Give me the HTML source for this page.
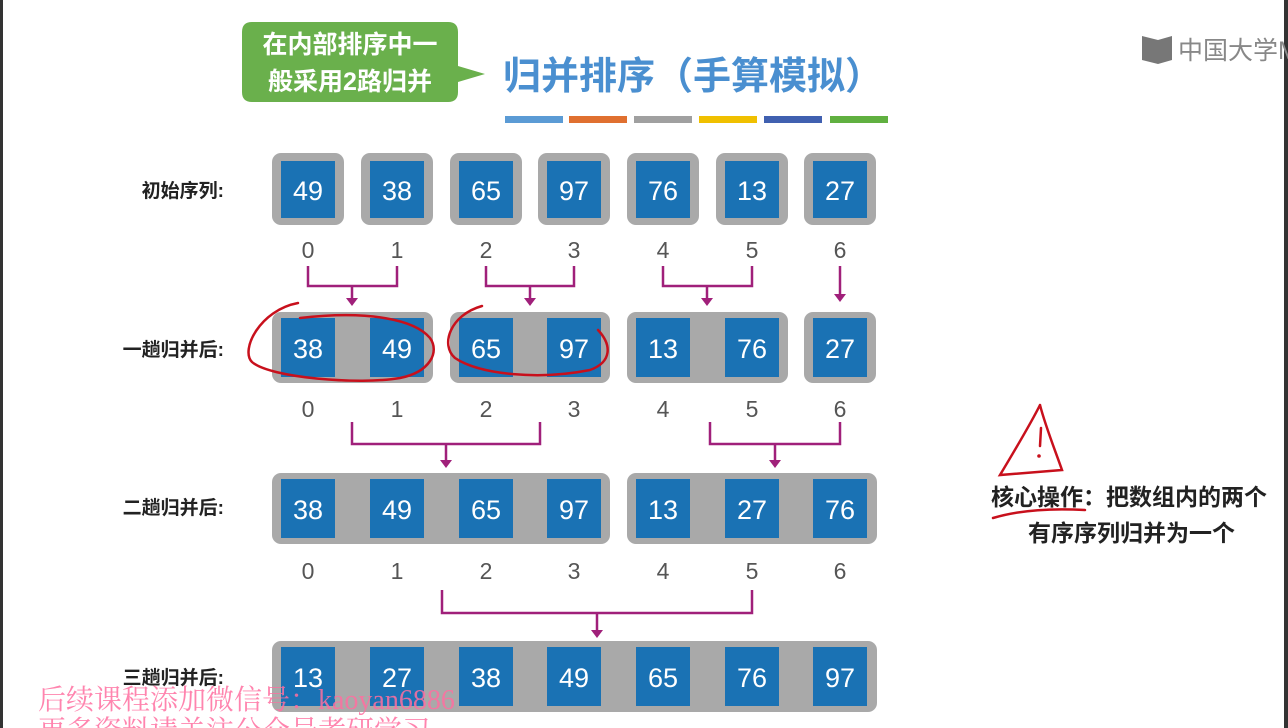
<!DOCTYPE html>
<html><head><meta charset="utf-8"><style>
html,body{margin:0;padding:0;background:#fff;}
svg{display:block}
</style></head><body>
<svg width="1288" height="728" viewBox="0 0 1288 728" xmlns="http://www.w3.org/2000/svg" font-family="Liberation Sans, Noto Sans CJK SC, sans-serif">
<rect width="1288" height="728" fill="#fff"/>
<rect x="0" y="0" width="3" height="728" fill="#333"/>
<rect x="1284" y="0" width="4" height="728" fill="#333"/>
<path d="M252 22 H448 Q458 22 458 32 V66 L485 74 L458 82 V92 Q458 102 448 102 H252 Q242 102 242 92 V32 Q242 22 252 22 Z" fill="#6ab04c"/>
<text x="350" y="53" fill="#fff" font-size="25" font-weight="bold" text-anchor="middle">在内部排序中一</text>
<text x="350" y="90" fill="#fff" font-size="25" font-weight="bold" text-anchor="middle">般采用2路归并</text>
<text x="503" y="89" fill="#4a8fd0" font-size="38" font-weight="bold">归并排序（手算模拟）</text>
<g>
<rect x="505" y="116" width="58" height="7" fill="#5b9bd5"/>
<rect x="569" y="116" width="58" height="7" fill="#e07030"/>
<rect x="634" y="116" width="58" height="7" fill="#a0a0a0"/>
<rect x="699" y="116" width="58" height="7" fill="#f0c000"/>
<rect x="764" y="116" width="58" height="7" fill="#4060b0"/>
<rect x="830" y="116" width="58" height="7" fill="#60b040"/>
</g>
<path d="M1142 36 L1158 40 L1172 36 V60 L1158 64 L1142 60 Z" fill="#777"/>
<text x="1178" y="59" fill="#888" font-size="25">中国大学M</text>
<g font-size="19" font-weight="bold" fill="#222" text-anchor="end">
<text x="224" y="197">初始序列:</text>
<text x="224" y="356">一趟归并后:</text>
<text x="224" y="514">二趟归并后:</text>
<text x="224" y="684">三趟归并后:</text>
</g>
<g fill="#a9a9a9">
<rect x="272" y="153" width="72" height="72" rx="9"/>
<rect x="361" y="153" width="72" height="72" rx="9"/>
<rect x="450" y="153" width="72" height="72" rx="9"/>
<rect x="538" y="153" width="72" height="72" rx="9"/>
<rect x="627" y="153" width="72" height="72" rx="9"/>
<rect x="716" y="153" width="72" height="72" rx="9"/>
<rect x="804" y="153" width="72" height="72" rx="9"/>
<rect x="272" y="312" width="161" height="71" rx="9"/>
<rect x="450" y="312" width="160" height="71" rx="9"/>
<rect x="627" y="312" width="161" height="71" rx="9"/>
<rect x="804" y="312" width="72" height="71" rx="9"/>
<rect x="272" y="473" width="338" height="71" rx="9"/>
<rect x="627" y="473" width="250" height="71" rx="9"/>
<rect x="272" y="641" width="605" height="71" rx="9"/>
</g>
<g fill="#1a72b4">
<rect x="281" y="161" width="54" height="57"/><rect x="370" y="161" width="54" height="57"/><rect x="459" y="161" width="54" height="57"/><rect x="547" y="161" width="54" height="57"/><rect x="636" y="161" width="54" height="57"/><rect x="725" y="161" width="54" height="57"/><rect x="813" y="161" width="54" height="57"/>
<rect x="281" y="318" width="54" height="59"/><rect x="370" y="318" width="54" height="59"/><rect x="459" y="318" width="54" height="59"/><rect x="547" y="318" width="54" height="59"/><rect x="636" y="318" width="54" height="59"/><rect x="725" y="318" width="54" height="59"/><rect x="813" y="318" width="54" height="59"/>
<rect x="281" y="479" width="54" height="59"/><rect x="370" y="479" width="54" height="59"/><rect x="459" y="479" width="54" height="59"/><rect x="547" y="479" width="54" height="59"/><rect x="636" y="479" width="54" height="59"/><rect x="725" y="479" width="54" height="59"/><rect x="813" y="479" width="54" height="59"/>
<rect x="281" y="647" width="54" height="59"/><rect x="370" y="647" width="54" height="59"/><rect x="459" y="647" width="54" height="59"/><rect x="547" y="647" width="54" height="59"/><rect x="636" y="647" width="54" height="59"/><rect x="725" y="647" width="54" height="59"/><rect x="813" y="647" width="54" height="59"/>
</g>
<g fill="#fff" font-size="27" text-anchor="middle">
<text x="308" y="200">49</text><text x="397" y="200">38</text><text x="486" y="200">65</text><text x="574" y="200">97</text><text x="663" y="200">76</text><text x="752" y="200">13</text><text x="840" y="200">27</text>
<text x="308" y="358">38</text><text x="397" y="358">49</text><text x="486" y="358">65</text><text x="574" y="358">97</text><text x="663" y="358">13</text><text x="752" y="358">76</text><text x="840" y="358">27</text>
<text x="308" y="519">38</text><text x="397" y="519">49</text><text x="486" y="519">65</text><text x="574" y="519">97</text><text x="663" y="519">13</text><text x="752" y="519">27</text><text x="840" y="519">76</text>
<text x="308" y="687">13</text><text x="397" y="687">27</text><text x="486" y="687">38</text><text x="574" y="687">49</text><text x="663" y="687">65</text><text x="752" y="687">76</text><text x="840" y="687">97</text>
</g>
<g fill="#555" font-size="23" text-anchor="middle">
<text x="308" y="258">0</text><text x="397" y="258">1</text><text x="486" y="258">2</text><text x="574" y="258">3</text><text x="663" y="258">4</text><text x="752" y="258">5</text><text x="840" y="258">6</text>
<text x="308" y="417">0</text><text x="397" y="417">1</text><text x="486" y="417">2</text><text x="574" y="417">3</text><text x="663" y="417">4</text><text x="752" y="417">5</text><text x="840" y="417">6</text>
<text x="308" y="579">0</text><text x="397" y="579">1</text><text x="486" y="579">2</text><text x="574" y="579">3</text><text x="663" y="579">4</text><text x="752" y="579">5</text><text x="840" y="579">6</text>
</g>
<g stroke="#a0207a" stroke-width="2.5" fill="none">
<path d="M308 266 V286 H397 V266 M352 286 V300"/>
<path d="M486 266 V286 H574 V266 M530 286 V300"/>
<path d="M663 266 V286 H752 V266 M707 286 V300"/>
<path d="M840 266 V296"/>
<path d="M352 422 V444 H540 V422 M446 444 V462"/>
<path d="M710 422 V444 H840 V422 M775 444 V462"/>
<path d="M442 590 V613 H752 V590 M597 613 V632"/>
</g>
<g fill="#a0207a">
<path d="M346 298 L358 298 L352 306Z"/><path d="M524 298 L536 298 L530 306Z"/><path d="M701 298 L713 298 L707 306Z"/><path d="M834 294 L846 294 L840 302Z"/>
<path d="M440 460 L452 460 L446 468Z"/><path d="M769 460 L781 460 L775 468Z"/><path d="M591 630 L603 630 L597 638Z"/>
</g>
<g stroke="#c8101c" stroke-width="2.5" fill="none" stroke-linecap="round">
<path d="M298 303 C260 310 240 350 252 362 C270 378 360 385 400 378 C430 372 440 352 430 338 C415 320 370 310 300 318"/>
<path d="M482 306 C450 315 440 345 455 358 C480 375 540 380 590 370 C612 362 612 345 598 330"/>
<path d="M1040 405 C1030 425 1012 455 1000 475 L1062 470 C1055 450 1045 425 1040 405"/>
<path d="M1041 428 L1040 446"/>
<path d="M993 518 C1020 510 1050 508 1085 510"/>
</g>
<circle cx="1039" cy="456" r="1.8" fill="#c8101c"/>
<g font-size="23" font-weight="bold" fill="#222">
<text x="991" y="505">核心操作：把数组内的两个</text>
<text x="1028" y="541">有序序列归并为一个</text>
</g>
<text x="38" y="709" fill="#ff6fa0" font-size="28" font-family="Liberation Serif, Noto Serif CJK SC, serif" opacity="0.85">后续课程添加微信号：kaoyan6886</text>
<text x="38" y="740" fill="#ff6fa0" font-size="28" font-family="Liberation Serif, Noto Serif CJK SC, serif" opacity="0.85">更多资料请关注公众号考研学习</text>
</svg>
</body></html>
